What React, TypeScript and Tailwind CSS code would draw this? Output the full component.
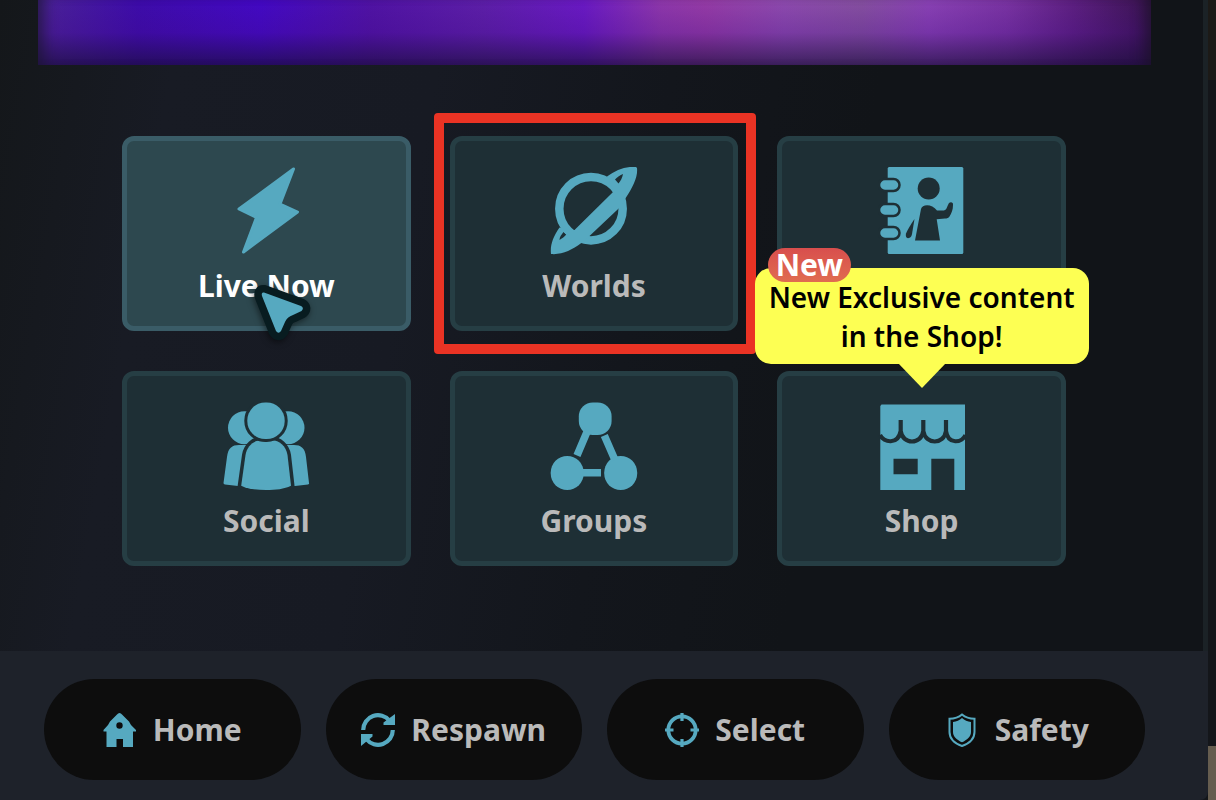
import type { ReactNode } from "react";
import clsx from "clsx";

/* ---------- Launch pad icons (88 x 88) ---------- */

function BoltIcon() {
  return (
    <svg viewBox="0 0 88 88" className="size-[88px]" fill="currentColor" stroke="currentColor" strokeWidth="3" strokeLinejoin="round">
      <path d="M71.5 2 L17 42 L34.5 50.5 L21.5 85 L75.5 45 L58 37 Z" />
    </svg>
  );
}

function PlanetIcon() {
  return (
    <svg viewBox="0 0 88 88" className="size-[88px]" fill="currentColor">
      <circle cx="41" cy="41.7" r="31.7" fill="none" stroke="currentColor" strokeWidth="8.5" />
      <path
        fillRule="evenodd"
        d="M86 0 C76 -1 66 3 57 9.5 L62 20 L62.8 25.3 L24.5 63 L19 64 L9.5 60.5 C3 70 0 78 1 87 C12 88 22 83 31 76.3 L39.5 69 L70.5 39.7 L75.5 31.3 C83 20 88 10 87 1 Z M73 7 C70 8 67.5 10 65 12.5 L68.5 16.5 C70.5 14 72.5 10.5 73 7 Z M9.5 73 C9.5 70 11.500 67.500 13.5 65 L16.3 67.5 C14 70 12 71.500 9.5 73 Z"
      />
    </svg>
  );
}

function AvatarBookIcon() {
  return (
    <svg viewBox="0 0 88 88" className="size-[88px]" fill="currentColor">
      <rect x="9.7" y="0" width="75.6" height="87" rx="1.5" />
      <g stroke="#1e2f35" strokeWidth="2.5">
        <rect x="1" y="12" width="20.5" height="12" rx="6" />
        <rect x="1" y="37" width="20.5" height="12" rx="6" />
        <rect x="1" y="60" width="20.5" height="12" rx="6" />
      </g>
      <g fill="#1e2f35">
        <circle cx="50.7" cy="21.5" r="11" />
        <path d="M43 42 C44 37 54 36.5 59 43.5 L66 43.5 C69 43 69.5 38 71 36 C73 34.5 75.5 35.5 75 38 C75 43 73.5 46 71.5 49.5 C70.5 51 69 51.5 67 51.5 L58.7 52.3 L62 73.5 L37 73.5 Z" />
        <path d="M36.5 52 C33 57 30 62 28 66.5 C27.5 69 28 71 30 71.2 C32.5 71 33.5 69.5 34 67 Z" />
      </g>
    </svg>
  );
}

function SocialIcon() {
  return (
    <svg viewBox="0 0 88 88" className="size-[88px]" fill="currentColor">
      <circle cx="22.5" cy="25.7" r="16.5" />
      <circle cx="66" cy="25.7" r="16.5" />
      <path d="M1.500 81 L5 55 C6 46 10 43 17 43 L72 43 C79 43 83 46 84 55 L87 81 Q87.500 82 86 82.500 L73 84 L16 84 L3 82.500 Q1.500 82 1.500 81 Z" />
      <path
        d="M19.200 83.7 L23.5 53 C25 44 32 38.3 39 38.3 L50 38.3 C57 38.3 64 44 65.5 53 L69 83.7 C62 87 54 88 44 88 C34 88 26 87 19.2 83.7 Z"
        stroke="#1e2f35"
        strokeWidth="7"
        paintOrder="stroke"
      />
      <rect x="25.300" y="0.5" width="37.400" height="36.5" rx="18" stroke="#1e2f35" strokeWidth="6" paintOrder="stroke" />
    </svg>
  );
}

function GroupsIcon() {
  return (
    <svg viewBox="0 0 88 88" className="size-[88px]" fill="currentColor">
      <rect x="28.8" y="0.500" width="32.8" height="32.5" rx="14" />
      <rect x="0.7" y="54" width="33" height="34" rx="16.5" />
      <rect x="54.2" y="54" width="33" height="34" rx="16.5" />
      <path d="M37.8 28 L27 53.5 M54.3 33.5 L65 58 M30 70.8 H51" fill="none" stroke="currentColor" strokeWidth="7.5" />
    </svg>
  );
}

function ShopIcon() {
  return (
    <svg viewBox="0 0 88 88" className="size-[88px]" fill="currentColor">
      <path
        fillRule="evenodd"
        d="M3.5 2.5 H87 V88 H76.3 V56.7 H53.3 V88 H2.3 V4 Z M15.5 56.7 V72.3 H39.7 V56.7 Z"
      />
      <path
        d="M2 33 C6 41 20 43 22.7 29 V18 M22.7 29 C24.5 43 43.5 43 45.3 29 V18 M45.3 29 C47.500 43 66 43 68 29 V18 M68 29 C70 43 84 41 87.500 33"
        fill="none"
        stroke="#1e2f35"
        strokeWidth="4.2"
      />
    </svg>
  );
}

/* ---------- Quick action icons (34 x 34) ---------- */

function HomeIcon() {
  return (
    <svg viewBox="0 0 34 34" className="size-[34px]" fill="currentColor">
      <path
        fillRule="evenodd"
        d="M16.5 0 Q18 0 19 1.5 L26 8.5 L28 12 L33 17 V18.5 H30 V34 H20 V26 H13.5 V34 H3.5 V18.5 H0.5 V17 L5 12 L7 8.5 L14 1.5 Q15 0 16.5 0 Z M16.5 9.3 A3.200 3.200 0 1 0 16.5 15.700 A3.200 3.200 0 1 0 16.5 9.3 Z"
      />
    </svg>
  );
}

function RespawnIcon() {
  return (
    <svg viewBox="0 0 34 34" className="size-[34px]" fill="currentColor">
      <path d="M2.2 17 A14.8 14.8 0 0 1 28.500 7.700" fill="none" stroke="currentColor" strokeWidth="4.2" />
      <path d="M34 1 V12 H22.500 V9.500 Z" />
      <path d="M31.8 17 A14.8 14.8 0 0 1 5.500 26.300" fill="none" stroke="currentColor" strokeWidth="4.2" />
      <path d="M0 33 V21 H11.500 V23.500 Z" />
    </svg>
  );
}

function SelectIcon() {
  return (
    <svg viewBox="0 0 34 34" className="size-[34px]" fill="none" stroke="currentColor">
      <circle cx="17" cy="17" r="13.7" strokeWidth="3.8" />
      <path d="M17 0 V8 M17 26 V34 M0 17 H8.5 M25.5 17 H34" strokeWidth="3.2" />
    </svg>
  );
}

function SafetyIcon() {
  return (
    <svg viewBox="0 0 34 34" className="size-[34px]" fill="currentColor">
      <path
        d="M17 1.5 C13.5 4.5 9 5.7 4.5 5.7 V19 C4.5 25.5 10 30.5 17 33 C24 30.5 29.5 25.5 29.5 19 V5.7 C25 5.7 20.5 4.5 17 1.5 Z"
        fill="none"
        stroke="currentColor"
        strokeWidth="2"
      />
      <path d="M17 5 C14.5 7.5 11.5 8.5 8 9 V19 C8 23.5 12 27 17 29.3 C22 27 26 23.5 26 19 V9 C22.5 8.5 19.5 7.5 17 5 Z" />
    </svg>
  );
}

function Pointer() {
  return (
    <svg viewBox="0 0 72 72" className="pointer-events-none absolute top-[138px] left-[122px] size-[72px] drop-shadow-[-1px_2px_3px_rgba(0,0,0,0.5)]" aria-hidden="true">
      <path
        d="M20 18.500 L57 32 Q60.500 34 57.500 37 L49 41 Q43 43 41 48 L37 57 Q34.500 60.500 32 57 L18 22 Q17 18 20 18.500 Z"
        fill="#56a9c0"
        stroke="#081c20"
        strokeWidth="15"
        strokeLinejoin="round"
        paintOrder="stroke"
      />
    </svg>
  );
}

type TileProps = {
  label: string;
  icon: ReactNode;
  active?: boolean;
  hideLabel?: boolean;
  children?: ReactNode;
};

function Tile({ label, icon, active, hideLabel, children }: TileProps) {
  return (
    <div className="relative">
      <button
        type="button"
        aria-label={label}
        className={clsx(
          "flex w-full flex-col items-center rounded-xl border-5 pt-[26px] pb-5",
          active ? "border-[#3a5c67] bg-[#2d484f] text-white" : "border-[#263e44] bg-[#1e2f35] text-[#bababa]"
        )}
      >
        <span className="text-[#56a9c0]">{icon}</span>
        <span className="mt-[11px] h-10 text-[30px] leading-10 font-bold">{!hideLabel && label}</span>
      </button>
      {children}
    </div>
  );
}

const actions = [
  { label: "Home", icon: <HomeIcon /> },
  { label: "Respawn", icon: <RespawnIcon /> },
  { label: "Select", icon: <SelectIcon /> },
  { label: "Safety", icon: <SafetyIcon /> },
];

export default function App() {
  return (
    <div className="flex min-h-screen overflow-hidden bg-[#13161a] font-['Noto_Sans','Open_Sans',sans-serif]">
      <div className="flex min-w-0 flex-1 flex-col">
        <main className="flex-1 border-r-5 border-[#1b2226] bg-[linear-gradient(100deg,#14171a_0%,#181b24_14%,#171a23_34%,#13161c_52%,#111418_68%,#111418_100%)] pb-[85px]">
          {/* Banner */}
          <div className="mr-[52px] ml-[38px] h-[65px] bg-[linear-gradient(90deg,#4b2396_0%,#3d0caa_9%,#4309c4_20%,#5013a4_30%,#5d1fa8_40%,#6a1ac4_49%,#8f38ab_56%,#963ca6_60%,#8e4bae_67%,#8650a0_74%,#8a42b4_80%,#7a34a2_87%,#5d2080_93%,#3a1450_100%)]">
            <div className="h-full bg-[linear-gradient(180deg,transparent_0%,rgba(60,8,130,0.25)_50%,rgba(28,14,62,0.7)_100%)] shadow-[inset_16px_0_14px_-10px_rgba(25,22,45,0.7),inset_-16px_0_14px_-10px_rgba(25,18,35,0.7)]" />
          </div>

          {/* Tiles */}
          <div className="mt-[71px] mr-[137px] ml-[122px] grid grid-cols-3 gap-x-[39px] gap-y-10">
            <Tile label="Live Now" icon={<BoltIcon />} active>
              <Pointer />
            </Tile>
            <Tile label="Worlds" icon={<PlanetIcon />}>
              <div className="pointer-events-none absolute -inset-y-[23px] -right-[18px] -left-4 rounded-sm border-[10px] border-[#ea3324]" />
            </Tile>
            <Tile label="Avatars" icon={<AvatarBookIcon />} hideLabel />
            <Tile label="Social" icon={<SocialIcon />} />
            <Tile label="Groups" icon={<GroupsIcon />} />
            <Tile label="Shop" icon={<ShopIcon />}>
              <div className="absolute bottom-[202px] left-1/2 w-[334px] -translate-x-1/2 rounded-2xl bg-[#fdff53] pt-[10px] pb-2 text-center text-[28px] leading-[39px] font-semibold text-black">
                New Exclusive content
                <br />
                in the Shop!
                <svg viewBox="0 0 48 25" className="absolute top-full left-1/2 -mt-px h-[25px] w-12 -translate-x-1/2" fill="#fdff53" aria-hidden="true">
                  <path d="M0 0 H48 L24 25 Z" />
                </svg>
                <span className="absolute -top-5 left-[13px] rounded-full bg-linear-to-b from-[#d84e4d] to-[#e06c50] px-2 text-[30px] leading-[34px] font-bold text-white">
                  New
                </span>
              </div>
            </Tile>
          </div>
        </main>

        {/* Quick actions */}
        <footer className="grid grid-cols-4 gap-x-[25px] rounded-br-lg bg-[#1e222a] pt-7 pr-[63px] pb-5 pl-11">
          {actions.map((action) => (
            <button
              key={action.label}
              type="button"
              className="flex h-[101px] items-center justify-center gap-4 rounded-full bg-[#0d0d0d] text-[30px] font-bold text-[#bababa]"
            >
              <span className="text-[#56a9c0]">{action.icon}</span>
              {action.label}
            </button>
          ))}
        </footer>
      </div>

      {/* Sliver of the world behind the menu */}
      <div className="flex w-2 flex-col bg-[#14161a]">
        <div className="h-20 bg-[#1c1a17]" />
        <div className="flex-1" />
        <div className="h-[54px] bg-[#665d4f]" />
      </div>
    </div>
  );
}
